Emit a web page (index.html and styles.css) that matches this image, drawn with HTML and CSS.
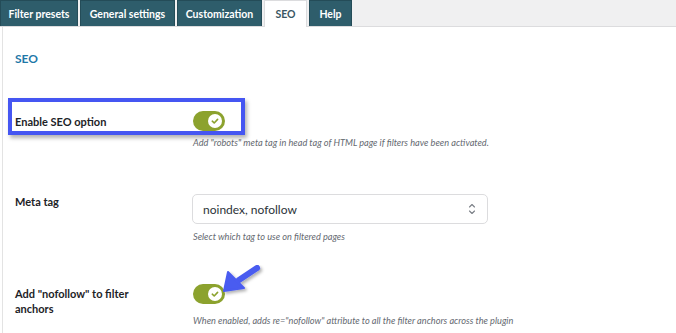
FILE: index.html
```html
<!DOCTYPE html>
<html>
<head>
<meta charset="utf-8">
<link rel="stylesheet" href="styles.css">
</head>
<body>
<nav class="tabs">
  <a class="tab t1">Filter presets</a>
  <a class="tab t2">General settings</a>
  <a class="tab t3">Customization</a>
  <a class="tab t4 active">SEO</a>
  <a class="tab t5">Help</a>
</nav>
<main class="panel">
  <h2 class="title">SEO</h2>
  <div class="row row-first">
    <div class="label">Enable SEO option</div>
    <div class="field">
      <span class="toggle"><span class="knob"><svg viewBox="0 0 14 14" width="14" height="14"><path d="M4.3 7.2 L6.2 9 L9.6 5.4" fill="none" stroke="#8ca22e" stroke-width="1.6" stroke-linecap="round" stroke-linejoin="round"/></svg></span></span>
      <p class="desc">Add "robots" meta tag in head tag of HTML page if filters have been activated.</p>
    </div>
  </div>
  <div class="row row-second">
    <div class="label">Meta tag</div>
    <div class="field">
      <div class="select"><span>noindex, nofollow</span><svg viewBox="0 0 10 14" width="10" height="14"><path d="M2.5 5 L5 2.5 L7.5 5 M2.5 9 L5 11.5 L7.5 9" fill="none" stroke="#7a7f86" stroke-width="1.1" stroke-linecap="round" stroke-linejoin="round"/></svg></div>
      <p class="desc">Select which tag to use on filtered pages</p>
    </div>
  </div>
  <div class="row row-third">
    <div class="label">Add "nofollow" to filter<br>anchors</div>
    <div class="field">
      <span class="toggle"><span class="knob"><svg viewBox="0 0 14 14" width="14" height="14"><path d="M4.3 7.2 L6.2 9 L9.6 5.4" fill="none" stroke="#8ca22e" stroke-width="1.6" stroke-linecap="round" stroke-linejoin="round"/></svg></span></span>
      <p class="desc">When enabled, adds re="nofollow" attribute to all the filter anchors across the plugin</p>
    </div>
  </div>
  <div class="highlight"></div>
  <svg class="pointer" viewBox="0 0 50 36" width="50" height="36">
    <defs>
      <filter id="sh" x="-30%" y="-30%" width="160%" height="160%">
        <feDropShadow dx="2" dy="2" stdDeviation="1.5" flood-color="#000" flood-opacity="0.3"/>
      </filter>
    </defs>
    <g filter="url(#sh)" fill="#4a5bf0" stroke="#4a5bf0" stroke-linejoin="round">
      <path d="M36 3 L18 15" stroke-width="6" stroke-linecap="round" fill="none"/>
      <path d="M3 26 L7 7 L23 23 Z" stroke-width="2"/>
    </g>
  </svg>
</main>
</body>
</html>
```
FILE: styles.css
```css
* { box-sizing: border-box; }
html, body { margin: 0; padding: 0; background: #fff; }
body {
  font-family: Lato, "Open Sans", sans-serif;
  color: #1d2327;
  width: 676px;
  height: 333px;
  overflow: hidden;
}
.tabs {
  display: flex;
  gap: 2px;
  height: 27px;
  background: #f0f0f1;
  border-bottom: 1px solid #dcdcde;
  padding-left: 0;
}
.tab {
  display: flex;
  align-items: center;
  justify-content: center;
  height: 26px;
  padding: 0;
  background: #2e5d6b;
  border: 1px solid #244c58;
  border-bottom: none;
  color: #fff;
  font-size: 10.5px;
  font-weight: 700;
  white-space: nowrap;
}
.t1 { width: 78px; }
.t2 { width: 95px; }
.t3 { width: 85px; }
.t4 { width: 43px; }
.t5 { width: 43px; }
.tab.active {
  background: #fff;
  color: #3a5663;
  border-color: #dcdcde;
  height: 27px;
}
.panel {
  position: relative;
  margin-left: 2px;
  border-left: 1px solid #e3e3e3;
  height: 306px;
  padding: 0 0 0 12px;
}
.title {
  margin: 0;
  padding-top: 24px;
  font-size: 12px;
  font-weight: 700;
  color: #1f78a8;
  line-height: 16px;
  height: 84px;
}
.row {
  display: grid;
  grid-template-columns: 178px 1fr;
}
.row-second { margin-top: 45px; }
.row-third { margin-top: 41px; }
.label {
  font-size: 11px;
  font-weight: 700;
  line-height: 15px;
  padding-top: 3px;
  color: #1d2327;
}
.row-second .label { padding-top: 0; }
.row-third .label { padding-top: 2px; }
.field { display: flex; flex-direction: column; align-items: flex-start; }
.toggle {
  display: flex;
  justify-content: flex-end;
  align-items: center;
  width: 32px;
  height: 20px;
  border-radius: 10px;
  background: #8ca22e;
  padding-right: 3px;
}
.knob {
  display: flex;
  width: 14px;
  height: 14px;
  border-radius: 50%;
  background: #fff;
}
.desc {
  margin: 6px 0 0;
  font-size: 9.2px;
  line-height: 12px;
  font-style: italic;
  color: #646970;
}
.select {
  display: flex;
  align-items: center;
  justify-content: space-between;
  width: 296px;
  height: 30px;
  margin-left: -1px;
  border: 1px solid #dcdcde;
  border-radius: 5px;
  padding: 0 10px;
  font-size: 12px;
  color: #2c3338;
}
.row-second .desc { margin-top: 7px; }
.row-third .desc { margin-top: 11px; }
.highlight {
  position: absolute;
  left: 5px;
  top: 71px;
  width: 237px;
  height: 37px;
  border: 4px solid #4556f2;
  box-shadow: 2px 3px 4px rgba(0,0,0,0.3);
}
.pointer {
  position: absolute;
  left: 218px;
  top: 238px;
}
```
